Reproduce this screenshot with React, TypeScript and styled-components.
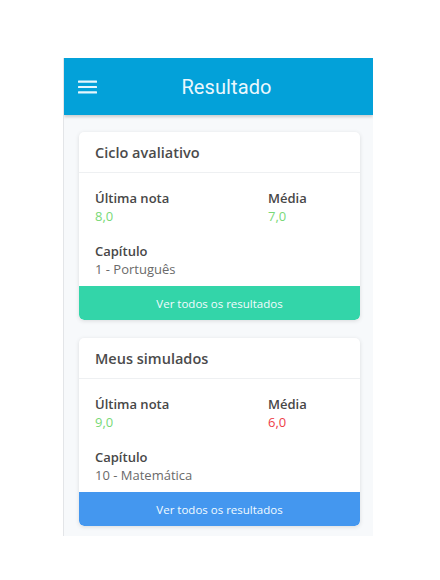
import React from 'react';
import styled, { createGlobalStyle } from 'styled-components';

const GlobalStyle = createGlobalStyle`
  html, body {
    margin: 0;
    padding: 0;
    background: #ffffff;
  }
  body {
    font-family: 'Open Sans', 'Noto Sans', sans-serif;
  }
`;

const Page = styled.div`
  padding: 58px 0 0 63px;
`;

const Screen = styled.div`
  width: 310px;
  height: 478px;
  background: #f7f9fb;
  border-left: 1px solid #e3e5e8;
  box-sizing: border-box;
  overflow: hidden;
  display: flex;
  flex-direction: column;
`;

const Header = styled.header`
  height: 57px;
  flex-shrink: 0;
  background: #03a1d9;
  box-shadow: 0 2px 3px rgba(0, 0, 0, 0.18);
  display: grid;
  grid-template-columns: 40px 1fr 40px;
  align-items: center;
  padding: 0 0 0 14px;
  color: #ffffff;
  position: relative;
  z-index: 1;
`;

const MenuButton = styled.span`
  display: flex;
  align-items: center;
`;

const HeaderTitle = styled.h1`
  margin: 0;
  font-family: Roboto, 'Liberation Sans', sans-serif;
  font-weight: 400;
  font-size: 20px;
  letter-spacing: 0.1px;
  text-align: center;
  color: #eaf7fd;
  transform: translateX(1px);
`;

const Content = styled.main`
  display: flex;
  flex-direction: column;
  gap: 18px;
  padding: 17px 13px 0 15px;
`;

const Card = styled.section`
  background: #ffffff;
  border-radius: 5px;
  box-shadow: 0 1px 4px rgba(0, 0, 0, 0.12);
  overflow: hidden;
`;

const CardTitle = styled.h2`
  margin: 0;
  height: 40px;
  display: flex;
  align-items: center;
  padding: 0 16px;
  border-bottom: 1px solid #eef0f2;
  font-size: 14.5px;
  font-weight: 600;
  color: #4b4b4b;
`;

const CardBody = styled.div`
  padding: 16px 16px 8px;
  display: flex;
  flex-direction: column;
  gap: 17px;
`;

const Row = styled.div`
  display: grid;
  grid-template-columns: 173px 1fr;
`;

const Field = styled.div`
  display: flex;
  flex-direction: column;
`;

const Label = styled.span`
  font-size: 13px;
  line-height: 18px;
  font-weight: 600;
  color: #474747;
`;

const Value = styled.span<{ $tone?: 'good' | 'bad' }>`
  font-size: 13px;
  line-height: 18px;
  color: ${({ $tone }) =>
    $tone === 'good' ? '#78d977' : $tone === 'bad' ? '#ee3d48' : '#6a6a6a'};
`;

const ActionButton = styled.button<{ $color: string }>`
  display: block;
  width: 100%;
  height: 34px;
  border: none;
  border-radius: 0 0 5px 5px;
  background: ${({ $color }) => $color};
  color: #f2fbff;
  font-family: 'Open Sans', 'Noto Sans', sans-serif;
  font-size: 11.5px;
  cursor: pointer;
`;

const MenuIcon = () => (
  <svg width="19" height="14" viewBox="0 0 19 14" fill="#e6f6fd">
    <rect x="0" y="0.5" width="19" height="2.2" rx="0.5" />
    <rect x="0" y="5.9" width="19" height="2.2" rx="0.5" />
    <rect x="0" y="11.3" width="19" height="2.2" rx="0.5" />
  </svg>
);

type ResultCardProps = {
  title: string;
  lastGrade: string;
  lastTone: 'good' | 'bad';
  average: string;
  averageTone: 'good' | 'bad';
  chapter: string;
  buttonColor: string;
};

const ResultCard = ({
  title,
  lastGrade,
  lastTone,
  average,
  averageTone,
  chapter,
  buttonColor,
}: ResultCardProps) => (
  <Card>
    <CardTitle>{title}</CardTitle>
    <CardBody>
      <Row>
        <Field>
          <Label>Última nota</Label>
          <Value $tone={lastTone}>{lastGrade}</Value>
        </Field>
        <Field>
          <Label>Média</Label>
          <Value $tone={averageTone}>{average}</Value>
        </Field>
      </Row>
      <Field>
        <Label>Capítulo</Label>
        <Value>{chapter}</Value>
      </Field>
    </CardBody>
    <ActionButton $color={buttonColor}>Ver todos os resultados</ActionButton>
  </Card>
);

export default function App() {
  return (
    <>
      <GlobalStyle />
      <Page>
        <Screen>
          <Header>
            <MenuButton>
              <MenuIcon />
            </MenuButton>
            <HeaderTitle>Resultado</HeaderTitle>
            <span />
          </Header>
          <Content>
            <ResultCard
              title="Ciclo avaliativo"
              lastGrade="8,0"
              lastTone="good"
              average="7,0"
              averageTone="good"
              chapter="1 - Português"
              buttonColor="#33d5a9"
            />
            <ResultCard
              title="Meus simulados"
              lastGrade="9,0"
              lastTone="good"
              average="6,0"
              averageTone="bad"
              chapter="10 - Matemática"
              buttonColor="#4497ef"
            />
          </Content>
        </Screen>
      </Page>
    </>
  );
}
